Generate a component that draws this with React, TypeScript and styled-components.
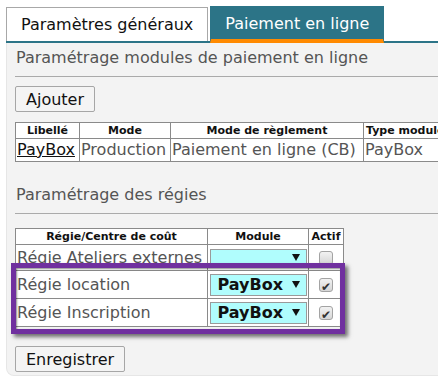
import React from 'react';
import styled, { createGlobalStyle } from 'styled-components';

const GlobalStyle = createGlobalStyle`
    html, body {
        margin: 0;
        padding: 0;
        background: #ffffff;
        overflow: hidden;
    }
    body {
        font-family: "DejaVu Sans", Verdana, sans-serif;
        font-size: 16px;
        color: #222;
    }
`;

const Page = styled.div`
    width: 560px;
    padding: 6px 0 0 6px;
`;

const TabBar = styled.div`
    display: flex;
    align-items: flex-end;
    gap: 2px;
    border-bottom: 2px solid #2c7487;
`;

const Tab = styled.div<{ $active?: boolean }>`
    box-sizing: border-box;
    height: ${p => (p.$active ? '37px' : '34px')};
    padding: 0 14px;
    line-height: ${p => (p.$active ? '33px' : '34px')};
    font-size: 16px;
    white-space: nowrap;
    background: ${p => (p.$active ? '#2c7487' : '#ffffff')};
    color: ${p => (p.$active ? '#ffffff' : '#111')};
    border: 1px solid ${p => (p.$active ? '#2c7487' : '#a8a8a8')};
    border-bottom: ${p => (p.$active ? '4px solid #ff8a00' : 'none')};
    margin-bottom: ${p => (p.$active ? '-2px' : '0')};
`;

const Panel = styled.div`
    background: #f3f3f3;
    border: 1px solid #e6e6e6;
    border-top: none;
    border-radius: 0 0 0 8px;
    padding: 0 8px 3px 8px;
`;

const Heading = styled.h2<{ $gap?: number }>`
    margin: 0;
    margin-top: ${p => p.$gap ?? 0}px;
    padding: 5px 0 8px 1px;
    line-height: 20px;
    font-size: 16px;
    font-weight: normal;
    color: #555;
    border-bottom: 1px solid #aaa;
`;

const Button = styled.button<{ $gap: number; $width: number }>`
    display: block;
    box-sizing: border-box;
    margin-top: ${p => p.$gap}px;
    width: ${p => p.$width}px;
    height: 26px;
    padding: 0;
    font-family: "DejaVu Sans", Verdana, sans-serif;
    font-size: 16px;
    color: #111;
    background: #f4f4f4;
    border: 1px solid #a6a6a6;
    border-radius: 2px;
`;

const Table = styled.table<{ $gap: number }>`
    margin-top: ${p => p.$gap}px;
    border-collapse: collapse;
    background: #ffffff;
    table-layout: fixed;
`;

const Th = styled.th<{ $w: number; $left?: boolean }>`
    width: ${p => p.$w}px;
    padding: 0 2px;
    height: 15px;
    line-height: 14px;
    font-size: 11px;
    font-weight: bold;
    color: #111;
    text-align: ${p => (p.$left ? 'left' : 'center')};
    border: 1px solid #8a8a8a;
    white-space: nowrap;
    overflow: hidden;
`;

const Td = styled.td`
    padding: 0 1px;
    height: 22px;
    line-height: 22px;
    font-size: 16px;
    color: #555;
    border: 1px solid #8a8a8a;
    white-space: nowrap;
    overflow: hidden;
`;

const RegieTd = styled(Td)<{ $h: number }>`
    height: ${p => p.$h}px;
`;

const CheckTd = styled(Td)`
    text-align: center;
    vertical-align: middle;
`;

const Link = styled.a`
    color: #111;
    text-decoration: underline;
`;

const TableWrap = styled.div`
    position: relative;
    margin-top: 14px;
    width: max-content;
`;

// annotation frame drawn over the two configured rows
const Highlight = styled.div`
    position: absolute;
    left: -4px;
    top: 35px;
    width: 334px;
    height: 71px;
    box-sizing: border-box;
    border: 5px solid #70309f;
    box-shadow: 3px 3px 4px rgba(0, 0, 0, 0.55), inset 1px 1px 2px rgba(0, 0, 0, 0.45);
    pointer-events: none;
`;

const Select = styled.div<{ $tall?: boolean }>`
    box-sizing: border-box;
    display: flex;
    align-items: center;
    width: 97px;
    height: ${p => (p.$tall ? '22px' : '17px')};
    margin: 0 auto;
    padding: 0 6px 0 7px;
    background: #b0fdfd;
    border: 1px solid #9a9a9a;
    font-size: 16px;
    font-weight: bold;
    color: #111;
    line-height: 20px;
`;

const Arrow = styled.span`
    margin-left: auto;
    width: 0;
    height: 0;
    border-left: 4px solid transparent;
    border-right: 4px solid transparent;
    border-top: 7px solid #111;
`;

const Check = styled.span<{ $on?: boolean }>`
    display: inline-block;
    box-sizing: border-box;
    width: 14px;
    height: 14px;
    vertical-align: middle;
    border: 1px solid #a3a3a3;
    border-radius: 3px;
    background: linear-gradient(#f2f2f2, #d6d6d6);
    position: relative;
    &::after {
        content: ${p => (p.$on ? "'✔'" : "''")};
        position: absolute;
        left: 1px;
        top: -3px;
        font-size: 12px;
        color: #333;
    }
`;

const regies = [
    { name: 'Régie Ateliers externes', module: '', actif: false, h: 25 },
    { name: 'Régie location', module: 'PayBox', actif: true, h: 27 },
    { name: 'Régie Inscription', module: 'PayBox', actif: true, h: 27 },
];

export default function App() {
    return (
        <Page>
            <GlobalStyle />
            <TabBar>
                <Tab>Paramètres généraux</Tab>
                <Tab $active>Paiement en ligne</Tab>
            </TabBar>
            <Panel>
                <Heading>Paramétrage modules de paiement en ligne</Heading>
                <Button $gap={9} $width={80}>Ajouter</Button>
                <Table $gap={10}>
                    <thead>
                        <tr>
                            <Th $w={59}>Libellé</Th>
                            <Th $w={86}>Mode</Th>
                            <Th $w={188}>Mode de règlement</Th>
                            <Th $w={110} $left>Type module</Th>
                        </tr>
                    </thead>
                    <tbody>
                        <tr>
                            <Td><Link href="#">PayBox</Link></Td>
                            <Td>Production</Td>
                            <Td>Paiement en ligne (CB)</Td>
                            <Td>PayBox</Td>
                        </tr>
                    </tbody>
                </Table>
                <Heading $gap={18}>Paramétrage des régies</Heading>
                <TableWrap>
                    <Table $gap={0}>
                        <thead>
                            <tr>
                                <Th $w={187}>Régie/Centre de coût</Th>
                                <Th $w={96}>Module</Th>
                                <Th $w={30}>Actif</Th>
                            </tr>
                        </thead>
                        <tbody>
                            {regies.map(r => (
                                <tr key={r.name}>
                                    <RegieTd $h={r.h}>{r.name}</RegieTd>
                                    <RegieTd $h={r.h}>
                                        <Select $tall={!!r.module}>
                                            {r.module}
                                            <Arrow />
                                        </Select>
                                    </RegieTd>
                                    <CheckTd><Check $on={r.actif} /></CheckTd>
                                </tr>
                            ))}
                        </tbody>
                    </Table>
                    <Highlight />
                </TableWrap>
                <Button $gap={19} $width={110}>Enregistrer</Button>
            </Panel>
        </Page>
    );
}
